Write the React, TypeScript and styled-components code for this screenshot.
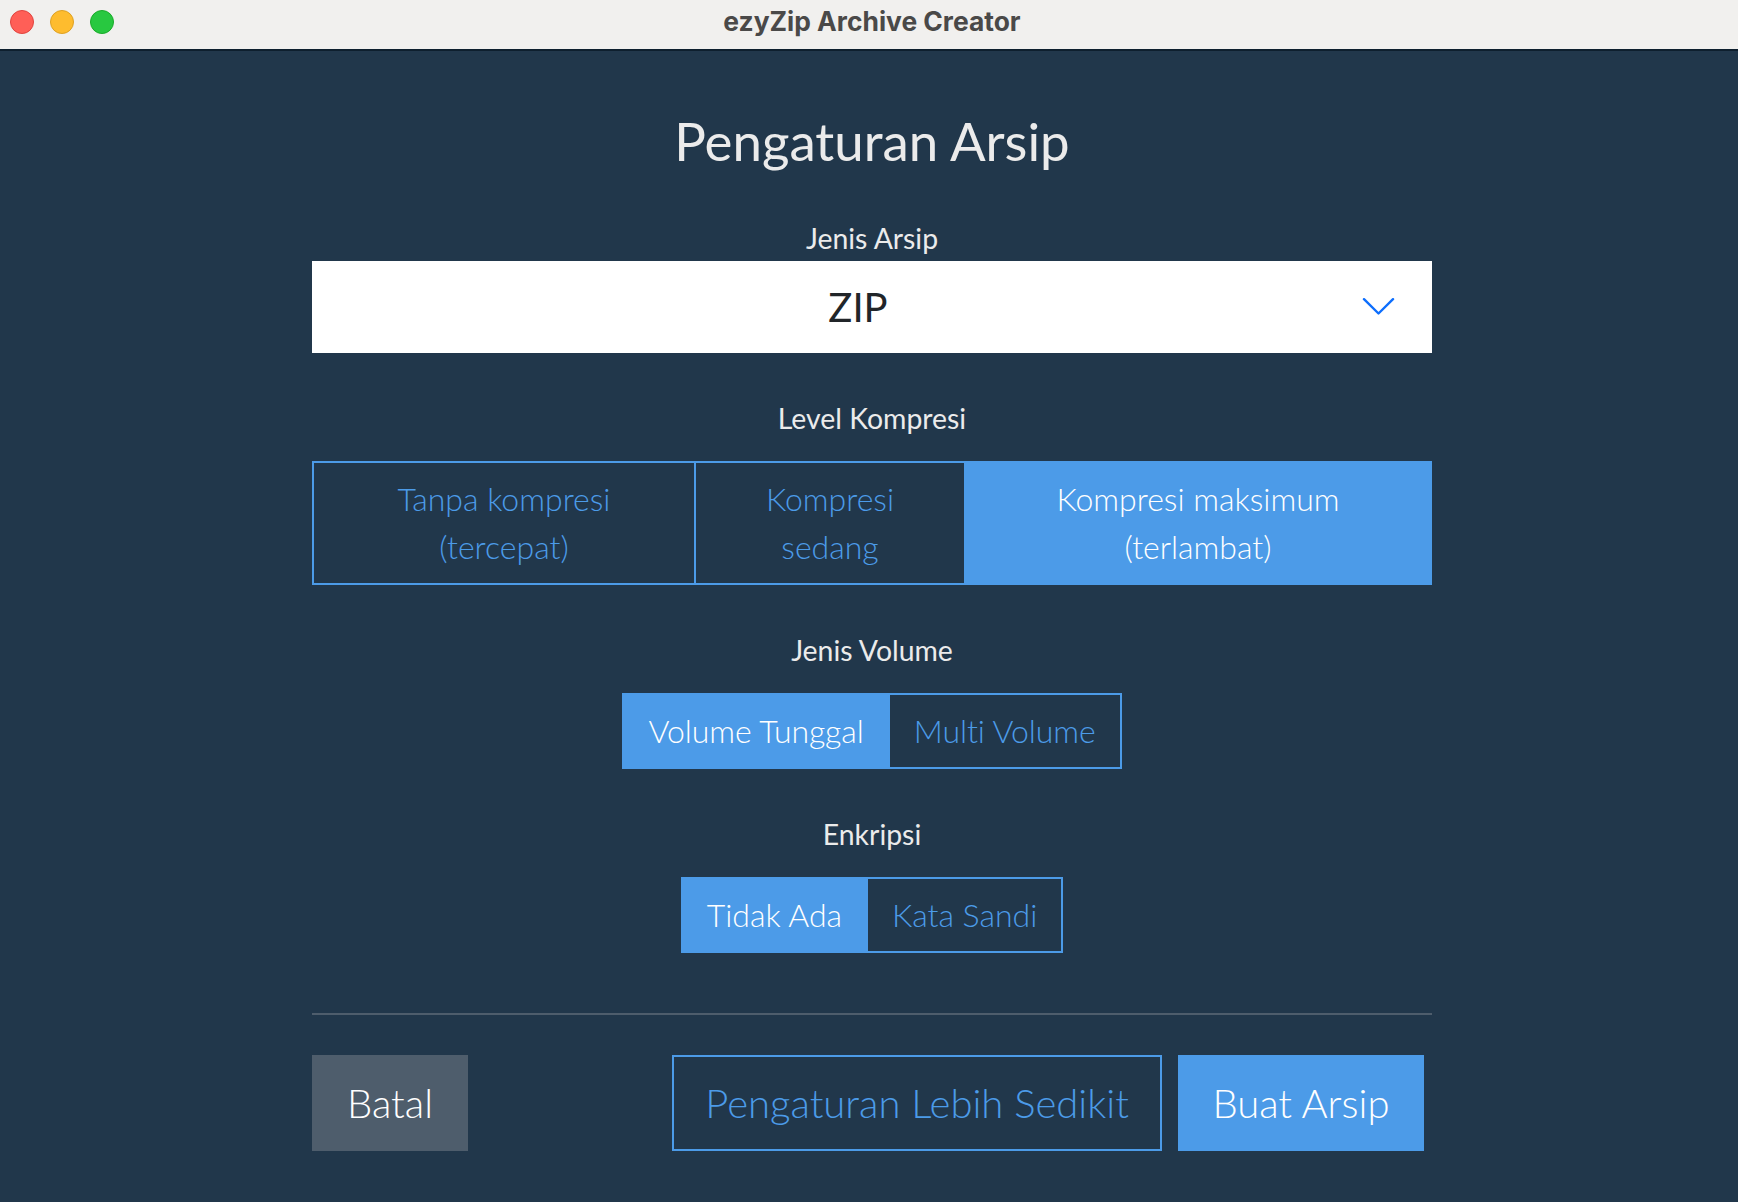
import React from "react";
import styled, { createGlobalStyle } from "styled-components";

const Global = createGlobalStyle`
  html, body { margin: 0; padding: 0; background: #21374b; }
  * { box-sizing: border-box; }
  body { font-family: "Lato", "Liberation Sans", sans-serif; font-variant-ligatures: none; }
`;

const Page = styled.div`
  width: 1738px;
  height: 1202px;
  overflow: hidden;
  background: #21374b;
  display: flex;
  flex-direction: column;
`;

const TitleBar = styled.header`
  height: 51px;
  flex: none;
  display: flex;
  align-items: center;
  padding: 0 0 5px 10px;
  background: #f1f0ee;
  border-bottom: 2px solid #0e1f2e;
  position: relative;
`;

const Lights = styled.div`
  display: flex;
  gap: 16px;
`;

const Light = styled.span<{ $color: string; $edge: string }>`
  width: 24px;
  height: 24px;
  border-radius: 50%;
  background: ${(p) => p.$color};
  border: 1px solid ${(p) => p.$edge};
`;

const WindowTitle = styled.div`
  position: absolute;
  left: 0;
  right: 0;
  top: 5px;
  text-align: center;
  padding-left: 6px;
  font-family: "Inter", "Liberation Sans", sans-serif;
  font-weight: 700;
  font-size: 26.4px;
  line-height: 32px;
  color: #4a4948;
`;

const Content = styled.main`
  width: 1120px;
  margin-left: 312px;
  display: flex;
  flex-direction: column;
  align-items: center;
`;

const Heading = styled.h1`
  margin: 57px 0 0;
  font-size: 52.8px;
  line-height: 66px;
  font-weight: 400;
  color: #ebebeb;
`;

const Label = styled.div<{ $top: number; $bottom: number }>`
  margin: ${(p) => p.$top}px 0 ${(p) => p.$bottom}px;
  font-size: 28.4px;
  line-height: 36px;
  font-weight: 400;
  color: #ebebeb;
`;

const Select = styled.div`
  width: 100%;
  height: 92px;
  background: #fff;
  display: flex;
  align-items: center;
  justify-content: center;
  padding-right: 28px;
  position: relative;
  font-size: 40px;
  color: #212529;
`;

const Chevron = styled.svg`
  position: absolute;
  right: 37px;
  top: 37px;
`;

const Group = styled.div<{ $full?: boolean; $tight?: boolean }>`
  display: flex;
  width: ${(p) => (p.$full ? "100%" : "auto")};
  letter-spacing: ${(p) => (p.$tight ? "-0.08px" : "normal")};
`;

const Segment = styled.div<{ $active?: boolean; $width?: number }>`
  flex: ${(p) => (p.$width ? `0 0 ${p.$width}px` : "none")};
  padding: 12px 24px;
  border: 2px solid #4c9be8;
  margin-left: -2px;
  text-align: center;
  font-size: 32px;
  line-height: 48px;
  font-weight: 300;
  white-space: pre-line;
  color: ${(p) => (p.$active ? "#fff" : "#4c9be8")};
  background: ${(p) => (p.$active ? "#4c9be8" : "transparent")};
  &:first-child { margin-left: 0; }
`;

const Divider = styled.hr`
  width: 100%;
  height: 2px;
  margin: 60px 0 40px;
  border: 0;
  background: #4e5d6c;
`;

const Actions = styled.div`
  width: 100%;
  display: flex;
  align-items: center;
`;

const Action = styled.div<{ $kind: "muted" | "outline" | "primary"; $padX: number }>`
  height: 96px;
  padding: 16px ${(p) => p.$padX}px;
  font-size: 40px;
  line-height: 60px;
  font-weight: 300;
  white-space: nowrap;
  border: 2px solid
    ${(p) => (p.$kind === "muted" ? "#4e5d6c" : "#4c9be8")};
  background: ${(p) =>
    p.$kind === "muted" ? "#4e5d6c" : p.$kind === "primary" ? "#4c9be8" : "transparent"};
  color: ${(p) => (p.$kind === "outline" ? "#4c9be8" : "#fff")};
`;

const Spacer = styled.div`
  flex: 1;
`;

const ActionGap = styled.div`
  width: 16px;
`;

const RightPad = styled.div`
  width: 8px;
`;

export default function App() {
  return (
    <Page>
      <Global />
      <TitleBar>
        <Lights>
          <Light $color="#ff5f57" $edge="#e0443e" />
          <Light $color="#febc2e" $edge="#dea123" />
          <Light $color="#28c840" $edge="#1aab29" />
        </Lights>
        <WindowTitle>ezyZip Archive Creator</WindowTitle>
      </TitleBar>
      <Content>
        <Heading>Pengaturan Arsip</Heading>
        <Label $top={46} $bottom={5}>Jenis Arsip</Label>
        <Select>
          ZIP
          <Chevron width="33" height="18" viewBox="0 0 33 18" fill="none">
            <path d="M2 1.2 L16.5 15.5 L31 1.2" stroke="#0d6efd" strokeWidth="2.4" strokeLinecap="round" strokeLinejoin="round" />
          </Chevron>
        </Select>
        <Label $top={47} $bottom={25}>Level Kompresi</Label>
        <Group $full>
          <Segment $width={384}>{"Tanpa kompresi\n(tercepat)"}</Segment>
          <Segment $width={272}>{"Kompresi\nsedang"}</Segment>
          <Segment $active $width={468}>{"Kompresi maksimum\n(terlambat)"}</Segment>
        </Group>
        <Label $top={47} $bottom={25}>Jenis Volume</Label>
        <Group $tight>
          <Segment $active>Volume Tunggal</Segment>
          <Segment>Multi Volume</Segment>
        </Group>
        <Label $top={47} $bottom={25}>Enkripsi</Label>
        <Group>
          <Segment $active>Tidak Ada</Segment>
          <Segment>Kata Sandi</Segment>
        </Group>
        <Divider />
        <Actions>
          <Action $kind="muted" $padX={33}>Batal</Action>
          <Spacer />
          <Action $kind="outline" $padX={31}>Pengaturan Lebih Sedikit</Action>
          <ActionGap />
          <Action $kind="primary" $padX={32.5}>Buat Arsip</Action>
          <RightPad />
        </Actions>
      </Content>
    </Page>
  );
}
